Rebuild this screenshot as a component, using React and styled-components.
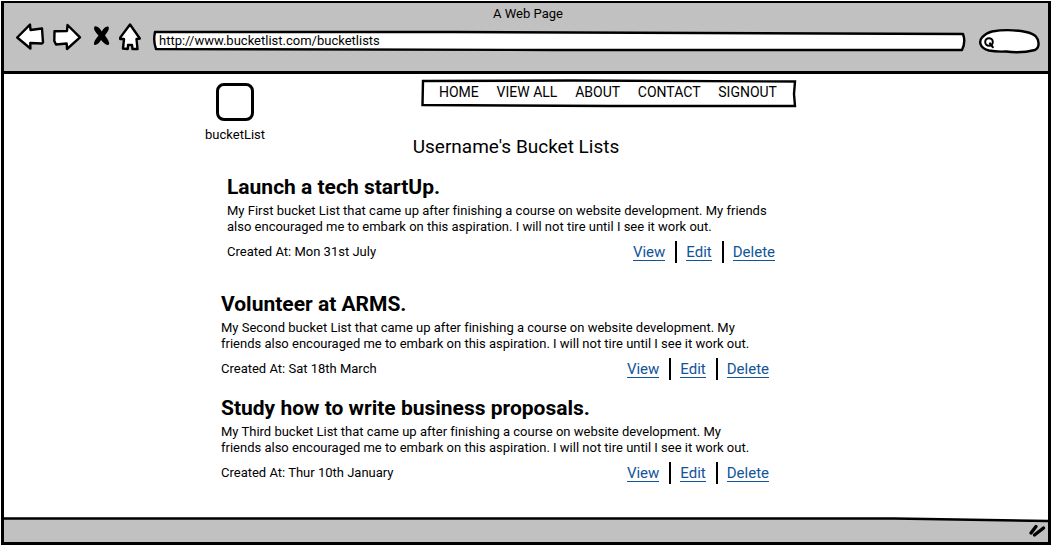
import React from "react";
import styled, { createGlobalStyle } from "styled-components";

const GlobalStyle = createGlobalStyle`
  *, *::before, *::after { box-sizing: border-box; }
  body {
    margin: 0;
    background: #fff;
    color: #000;
    font-family: Roboto, "Liberation Sans", sans-serif;
    font-size: 13px;
    font-variant-ligatures: none;
    line-height: 16px;
  }
  h1, h2, p, ul { margin: 0; padding: 0; }
  ul { list-style: none; }
`;

const BrowserWindow = styled.div`
  display: flex;
  flex-direction: column;
  min-height: calc(100vh - 2px);
  margin: 1px;
  border: solid #000;
  border-width: 2px 3px 3px;
`;

const TitleBar = styled.header`
  padding: 3px 8px 18px 12px;
  background: #c1c1c1;
  border-bottom: 3px solid #000;
`;

const WindowTitle = styled.div`
  text-align: center;
  padding-bottom: 1px;
`;

const Toolbar = styled.div`
  display: flex;
  align-items: flex-start;
`;

const ToolButtons = styled.div`
  display: flex;
  align-items: center;
  gap: 9px;
  margin-right: 12px;
`;

const ToolButton = styled.button`
  display: block;
  height: 28px;
  padding: 0;
  border: 0;
  background: none;

  svg { display: block; overflow: visible; }
`;

const Fields = styled.div`
  display: flex;
  flex: 1;
  align-items: center;
  gap: 14px;
  margin-top: 6px;
`;

const Field = styled.label`
  position: relative;
  display: block;
  flex: ${(p) => (p.$grow ? "1" : "0 0 61px")};
  height: ${(p) => (p.$grow ? "20px" : "24px")};
`;

const FieldInput = styled.input`
  position: relative;
  display: block;
  width: 100%;
  height: 100%;
  padding: 0 6px 2px;
  padding-left: ${(p) => (p.$icon ? "18px" : "6px")};
  border: 0;
  outline: 0;
  background: none;
  color: #000;
  font: inherit;
`;

const Outline = styled.svg`
  position: absolute;
  inset: 0;
  width: 100%;
  height: 100%;
  overflow: visible;
  pointer-events: none;

  path { vector-effect: non-scaling-stroke; }
`;

const Lens = styled.svg`
  position: absolute;
  left: 5px;
  top: 8px;
`;

const Page = styled.main`
  flex: 1;
  width: 100%;
  max-width: 642px;
  margin: 0 auto;
  padding: 5px 0 24px;
`;

const SiteHeader = styled.div`
  display: flex;
  align-items: flex-start;
  justify-content: space-between;
  padding-right: 51px;
`;

const Brand = styled.a`
  display: flex;
  flex-direction: column;
  align-items: center;
  gap: 6px;
  padding-top: 4px;
  color: #000;
  text-decoration: none;
`;

const LogoMark = styled.span`
  width: 38px;
  height: 38px;
  border: 3px solid #000;
  border-radius: 8px;
`;

const Nav = styled.nav`
  position: relative;
  width: 375px;
  height: 28px;
`;

const NavList = styled.ul`
  position: relative;
  display: flex;
  justify-content: space-between;
  padding: 5px 19px 0 18px;
`;

const NavLink = styled.a`
  color: #000;
  font-size: 14px;
  text-decoration: none;
`;

const PageTitle = styled.h1`
  padding: 0 20px 18px 0;
  margin-top: -6px;
  font-size: 19px;
  font-weight: 400;
  line-height: 20px;
  text-align: center;
`;

const Lists = styled.div`
  padding-left: 16px;
`;

const Entry = styled.article`
  max-width: 554px;
  margin-left: ${(p) => (p.$featured ? "6px" : "0")};
  margin-bottom: ${(p) => (p.$featured ? "29px" : "16px")};

  &:last-child { margin-bottom: 0; }
`;

const EntryTitle = styled.h2`
  font-size: 21px;
  font-weight: 700;
  line-height: 24px;
`;

const EntryText = styled.p`
  padding-top: 4px;
  white-space: nowrap;
`;

const EntryFooter = styled.footer`
  display: flex;
  align-items: center;
  justify-content: space-between;
  height: 22px;
  margin-top: 6px;
  padding-right: 6px;
`;

const Actions = styled.div`
  display: flex;
  align-items: center;
  height: 22px;
`;

const ActionLink = styled.a`
  border-bottom: 1px solid #11549a;
  color: #11549a;
  font-size: 15px;
  line-height: 16px;
  text-decoration: none;
`;

const Divider = styled.span`
  width: 2px;
  height: 22px;
  margin: 0 9px 0 10px;
  background: #000;
`;

const StatusBar = styled.div`
  position: relative;
  height: 24px;
  background: #c1c1c1;
`;

const Grip = styled.svg`
  position: absolute;
  right: 2px;
  bottom: 3px;
`;

const stroke = {
  stroke: "#000",
  strokeWidth: 2.4,
  strokeLinejoin: "round",
  strokeLinecap: "round",
};

const tools = [
  { label: "Back", d: "M1.2 14.5 L14 1.6 L14.5 7 L26 5.5 L27 19.5 L26 20.5 L14.3 20 L14.4 25.5 L1.2 14.5Z" },
  { label: "Forward", d: "M1.5 8.3 L14 8 L14.5 2 L27 14.3 L14 26 L13.7 20.5 L3 21.5 L1.3 18Z" },
];

const entries = [
  {
    title: "Launch a tech startUp.",
    lines: [
      "My First bucket List that came up after finishing a course on website development. My friends",
      "also encouraged me to embark on this aspiration. I will not tire until I see it work out.",
    ],
    date: "Mon 31st July",
    featured: true,
  },
  {
    title: "Volunteer at ARMS.",
    lines: [
      "My Second bucket List that came up after finishing a course on website development. My",
      "friends also encouraged me to embark on this aspiration. I will not tire until I see it work out.",
    ],
    date: "Sat 18th March",
  },
  {
    title: "Study how to write business proposals.",
    lines: [
      "My Third bucket List that came up after finishing a course on website development. My",
      "friends also encouraged me to embark on this aspiration. I will not tire until I see it work out.",
    ],
    date: "Thur 10th January",
  },
];

export default function App() {
  return (
    <>
      <GlobalStyle />
      <BrowserWindow>
        <TitleBar>
          <WindowTitle>A Web Page</WindowTitle>
          <Toolbar>
            <ToolButtons>
              {tools.map((t) => (
                <ToolButton key={t.label} aria-label={t.label}>
                  <svg width="28" height="28" aria-hidden="true">
                    <path d={t.d} fill="#fff" {...stroke} />
                  </svg>
                </ToolButton>
              ))}
              <ToolButton aria-label="Stop">
                <svg width="20" height="28" aria-hidden="true">
                  <path
                    d="M4.500 3.500 C7 2.500 10 5.500 11.800 8.500 C13.500 5.500 15.500 3 18 3.500 C20 4.500 18.500 8 15 12.500 C17.500 16 20 19.500 19 21.500 C16.500 23 13.500 20 11 17 C8.500 21 6 22.500 4.300 21.700 C3 19.500 6 15.500 8.500 12.700 C5.500 9 3 6 4.500 3.500Z"
                    fill="#000"
                  />
                </svg>
              </ToolButton>
              <ToolButton aria-label="Home">
                <svg width="22" height="28" aria-hidden="true">
                  <path
                    d="M1.2 14.6 L11 1.500 L20.800 15.500 L17.500 16 L18.500 26 L13.500 26 L13 22 L9 22 L8.800 26 L4 25.500 L5 16 L1.200 16Z"
                    fill="#fff"
                    {...stroke}
                  />
                </svg>
              </ToolButton>
            </ToolButtons>
            <Fields>
              <Field $grow>
                <Outline viewBox="0 0 811 20" preserveAspectRatio="none" aria-hidden="true">
                  <path d="M2 1 L300 1 L809 3 Q812 11 808 19 L400 19 L3 18 Q0 10 2 1Z" fill="#fff" {...stroke} />
                </Outline>
                <FieldInput aria-label="Address" defaultValue="http://www.bucketlist.com/bucketlists" />
              </Field>
              <Field>
                <Outline viewBox="0 0 61 24" preserveAspectRatio="none" aria-hidden="true">
                  <path
                    d="M13 2.500 Q30 -0.500 47 3 C57 5 59 9 59.500 14 Q60 19 56 21 Q42 24.500 27 22.500 Q17 23 10 21.500 C0 19 0 12 3 8.500 Q7 4 13 2.500Z"
                    fill="#fff"
                    {...stroke}
                  />
                </Outline>
                <Lens width="14" height="14" fill="none" aria-hidden="true">
                  <circle cx="5" cy="5" r="3.800" stroke="#000" strokeWidth="2" />
                  <path d="M6 6.500 L8.800 10.200" stroke="#000" strokeWidth="2.200" strokeLinecap="round" />
                </Lens>
                <FieldInput $icon aria-label="Search" />
              </Field>
            </Fields>
          </Toolbar>
        </TitleBar>

        <Page>
          <SiteHeader>
            <Brand href="#">
              <LogoMark />
              bucketList
            </Brand>
            <Nav>
              <Outline viewBox="0 0 375 28" preserveAspectRatio="none" aria-hidden="true">
                <path
                  d="M2 2 L150 1.500 L374 2.500 L373 15 L374 27 L190 27 L1.500 26 L2 2Z"
                  fill="#fff"
                  {...stroke}
                  strokeLinejoin="miter"
                />
              </Outline>
              <NavList>
                {["HOME", "VIEW ALL", "ABOUT", "CONTACT", "SIGNOUT"].map((name) => (
                  <li key={name}>
                    <NavLink href="#">{name}</NavLink>
                  </li>
                ))}
              </NavList>
            </Nav>
          </SiteHeader>
          <PageTitle>Username's Bucket Lists</PageTitle>
          <Lists>
            {entries.map((e) => (
              <Entry key={e.title} $featured={e.featured}>
                <EntryTitle>{e.title}</EntryTitle>
                <EntryText>
                  {e.lines[0]}
                  <br />
                  {e.lines[1]}
                </EntryText>
                <EntryFooter>
                  <span>Created At: {e.date}</span>
                  <Actions>
                    <ActionLink href="#">View</ActionLink>
                    <Divider />
                    <ActionLink href="#">Edit</ActionLink>
                    <Divider />
                    <ActionLink href="#">Delete</ActionLink>
                  </Actions>
                </EntryFooter>
              </Entry>
            ))}
          </Lists>
        </Page>

        <StatusBar>
          <Outline viewBox="0 0 1044 24" preserveAspectRatio="none" aria-hidden="true">
            <path d="M0 0 H1044 V2.500 L890 0.500Z" fill="#fff" />
            <path d="M0 0.500 L890 0.500 L1044 3" fill="none" {...stroke} />
          </Outline>
          <Grip width="18" height="16" aria-hidden="true">
            <path d="M3 10 L8 3.500 M6.500 12 L15.500 5" fill="none" {...stroke} strokeWidth="3.400" />
          </Grip>
        </StatusBar>
      </BrowserWindow>
    </>
  );
}
